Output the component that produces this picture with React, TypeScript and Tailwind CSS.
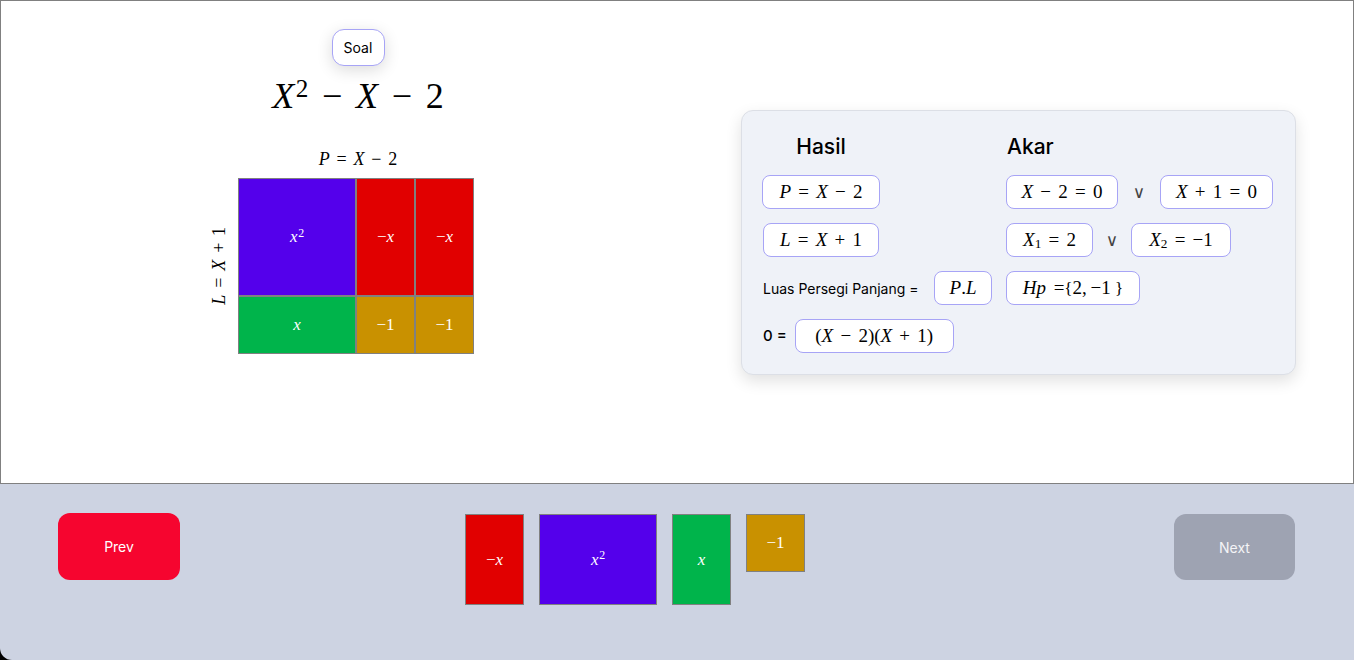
import React from "react";

const serif = "font-['Liberation_Serif','Times_New_Roman',serif]";
const sans = "font-['Inter','Liberation_Sans',sans-serif]";

function V({ children }: { children: React.ReactNode }) {
  return <i className="italic">{children}</i>;
}

function Op({ children }: { children: React.ReactNode }) {
  return <span className="mx-[0.38em]">{children}</span>;
}

function Sup({ children }: { children: React.ReactNode }) {
  return <span className="relative -top-[0.45em] ml-[0.06em] text-[0.7em]">{children}</span>;
}

function Sub({ children }: { children: React.ReactNode }) {
  return <span className="relative top-[0.2em] text-[0.7em]">{children}</span>;
}

function Box({ w, children }: { w: string; children: React.ReactNode }) {
  return (
    <div
      className={`${w} h-[34px] shrink-0 rounded-lg border border-[#a7a4f6] bg-white flex items-center justify-center text-[19px] text-black ${serif}`}
    >
      <span className="whitespace-nowrap">{children}</span>
    </div>
  );
}

function Or() {
  return (
    <span className="w-[14px] text-center text-[17px] leading-none text-[#444] font-['DejaVu_Sans_ExtraLight','DejaVu_Sans',sans-serif]">
      ∨
    </span>
  );
}

function Cell({ w, h, bg, children }: { w: string; h: string; bg: string; children: React.ReactNode }) {
  return (
    <div
      className={`${w} ${h} ${bg} border border-[#808080] flex items-center justify-center text-white text-[17px] ${serif}`}
    >
      <span className="whitespace-nowrap">{children}</span>
    </div>
  );
}

export default function App() {
  return (
    <div className={`w-[1354px] h-[660px] bg-black overflow-hidden ${sans}`}>
      <div className="h-[484px] bg-white border border-[#808080] flex">
        {/* left column */}
        <div className="w-[714px] flex flex-col items-center">
          <button className="mt-[28px] h-[37px] w-[53px] rounded-xl border border-[#a7a4f6] bg-white text-[14px] text-black shadow-[0_4px_16px_rgba(0,0,0,0.14)]">
            Soal
          </button>
          <div className={`mt-[12px] h-[36px] leading-[36px] text-[36px] text-black whitespace-nowrap ${serif}`}>
            <V>X</V>
            <Sup>2</Sup>
            <Op>−</Op>
            <V>X</V>
            <Op>−</Op>2
          </div>
          <div className={`mt-[36px] h-[18px] leading-[18px] text-[18px] text-black whitespace-nowrap ${serif}`}>
            <V>P</V>
            <Op>=</Op>
            <V>X</V>
            <Op>−</Op>2
          </div>
          <div className="mt-[10px] flex items-stretch">
            <div className="w-[26px] mr-[6px] flex items-center justify-center">
              <span className={`[writing-mode:vertical-rl] rotate-180 whitespace-nowrap text-[18px] text-black ${serif}`}>
                <V>L</V>
                <Op>=</Op>
                <V>X</V>
                <Op>+</Op>1
              </span>
            </div>
            <div className="grid grid-cols-[118px_59px_59px] grid-rows-[118px_58px]">
              <Cell w="w-[118px]" h="h-[118px]" bg="bg-[#5400eb]">
                <V>x</V>
                <Sup>2</Sup>
              </Cell>
              <Cell w="w-[59px]" h="h-[118px]" bg="bg-[#e10000]">
                −<V>x</V>
              </Cell>
              <Cell w="w-[59px]" h="h-[118px]" bg="bg-[#e10000]">
                −<V>x</V>
              </Cell>
              <Cell w="w-[118px]" h="h-[58px]" bg="bg-[#00b44b]">
                <V>x</V>
              </Cell>
              <Cell w="w-[59px]" h="h-[58px]" bg="bg-[#c99100]">
                −1
              </Cell>
              <Cell w="w-[59px]" h="h-[58px]" bg="bg-[#c99100]">
                −1
              </Cell>
            </div>
            <div className="w-[36px]" />
          </div>
        </div>

        {/* right panel */}
        <div className="ml-[26px] mt-[109px] self-start w-[555px] rounded-xl border border-[#dcdfe6] bg-[#eff2f8] shadow-[0_6px_16px_rgba(0,0,0,0.12)] pl-[20px] pt-[21px] pb-[21px]">
          <div className="grid grid-cols-[244px_1fr] gap-y-[14px] items-center">
            <div className="w-[118px] h-[29px] text-center text-[21px] leading-[29px] font-medium text-black">Hasil</div>
            <div className="h-[29px] pl-[1px] text-[21px] leading-[29px] font-medium text-black">Akar</div>

            <div className="flex">
              <Box w="w-[118px]">
                <V>P</V>
                <Op>=</Op>
                <V>X</V>
                <Op>−</Op>2
              </Box>
            </div>
            <div className="flex items-center gap-[14px]">
              <Box w="w-[112px]">
                <V>X</V>
                <Op>−</Op>2<Op>=</Op>0
              </Box>
              <Or />
              <Box w="w-[113px]">
                <V>X</V>
                <Op>+</Op>1<Op>=</Op>0
              </Box>
            </div>

            <div className="flex pl-[1px]">
              <Box w="w-[116px]">
                <V>L</V>
                <Op>=</Op>
                <V>X</V>
                <Op>+</Op>1
              </Box>
            </div>
            <div className="flex items-center gap-[12px]">
              <Box w="w-[87px]">
                <V>X</V>
                <Sub>1</Sub>
                <Op>=</Op>2
              </Box>
              <Or />
              <Box w="w-[100px]">
                <V>X</V>
                <Sub>2</Sub>
                <Op>=</Op>−1
              </Box>
            </div>

            <div className="flex items-center gap-[8px] pl-[1px]">
              <span className="w-[163px] text-[14px] text-black whitespace-nowrap">Luas Persegi Panjang =</span>
              <Box w="w-[58px]">
                <V>P</V>.<V>L</V>
              </Box>
            </div>
            <div className="flex">
              <Box w="w-[134px]">
                <V>H</V>
                <V>p</V>
                <span className="ml-[0.4em]">=</span>
                <span className="text-[17px]">{"{"}</span>2,<span className="ml-[0.2em]">−1</span>
                <span className="ml-[0.25em] text-[17px]">{"}"}</span>
              </Box>
            </div>

            <div className="col-span-2 flex items-center gap-[8px] pl-[1px]">
              <span className="text-[15px] font-medium text-black whitespace-nowrap">0 =</span>
              <Box w="w-[159px]">
                (<V>X</V>
                <Op>−</Op>2)(<V>X</V>
                <Op>+</Op>1)
              </Box>
            </div>
          </div>
        </div>
      </div>

      {/* bottom panel */}
      <div className="h-[176px] bg-[#cdd3e2] rounded-bl-xl flex items-start pt-[29px] pl-[58px] pr-[59px]">
        <button className="w-[122px] h-[67px] rounded-xl bg-[#f6052f] text-white text-[14px]">Prev</button>
        <div className="ml-[285px] mt-[1px] flex items-start gap-[15px]">
          <Cell w="w-[59px]" h="h-[91px]" bg="bg-[#e10000]">
            −<V>x</V>
          </Cell>
          <Cell w="w-[118px]" h="h-[91px]" bg="bg-[#5400eb]">
            <V>x</V>
            <Sup>2</Sup>
          </Cell>
          <Cell w="w-[59px]" h="h-[91px]" bg="bg-[#00b44b]">
            <V>x</V>
          </Cell>
          <Cell w="w-[59px]" h="h-[58px]" bg="bg-[#c99100]">
            −1
          </Cell>
        </div>
        <button className="ml-auto mt-[1px] w-[121px] h-[66px] rounded-xl bg-[#9ea3b2] text-[#f4f4f6] text-[14px]">Next</button>
      </div>
    </div>
  );
}
